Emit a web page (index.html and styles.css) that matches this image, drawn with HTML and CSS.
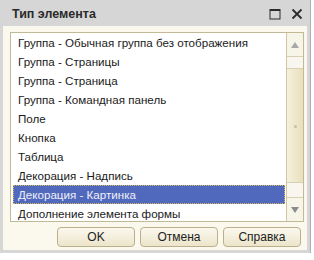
FILE: index.html
```html
<!DOCTYPE html>
<html lang="ru">
<head>
  <meta charset="UTF-8" />
  <title>Тип элемента</title>
  <link rel="stylesheet" href="styles.css">
</head>
<body>
  <div class="window">
    <div class="titlebar">
      <span class="title">Тип элемента</span>
      <span class="title-btns">
        <svg width="12" height="12" viewBox="0 0 12 12"><rect x="1" y="1.5" width="10" height="9.5" fill="none" stroke="#2b2b2b" stroke-width="1"/><line x1="1" y1="2" x2="11" y2="2" stroke="#2b2b2b" stroke-width="2"/></svg>
        <svg width="12" height="12" viewBox="0 0 12 12"><path d="M1.5 1.5 L10.5 10.5 M10.5 1.5 L1.5 10.5" stroke="#2b2b2b" stroke-width="1.8"/></svg>
      </span>
    </div>
    <div class="client">
      <div class="listbox">
        <ul class="items">
          <li>Группа - Обычная группа без отображения</li>
          <li>Группа - Страницы</li>
          <li>Группа - Страница</li>
          <li>Группа - Командная панель</li>
          <li>Поле</li>
          <li>Кнопка</li>
          <li>Таблица</li>
          <li>Декорация - Надпись</li>
          <li class="selected">Декорация - Картинка</li>
          <li>Дополнение элемента формы</li>
        </ul>
        <div class="scrollbar">
          <div class="sb-btn"><svg width="8" height="6" viewBox="0 0 8 6"><path d="M4 0 L8 6 L0 6 Z" fill="#a8a8a8"/></svg></div>
          <div class="sb-track top"></div>
          <div class="sb-thumb"><span class="grip"></span></div>
          <div class="sb-track bottom"></div>
          <div class="sb-btn"><svg width="8" height="6" viewBox="0 0 8 6"><path d="M0 0 L8 0 L4 6 Z" fill="#8c8c8c"/></svg></div>
        </div>
      </div>
      <div class="buttons">
        <button>OK</button>
        <button>Отмена</button>
        <button>Справка</button>
      </div>
    </div>
  </div>
</body>
</html>
```

FILE: styles.css
```css
html, body {
  margin: 0;
  padding: 0;
  background: #ffffff;
  font-family: 'Liberation Sans', Arial, sans-serif;
}
.window {
  width: 304px;
  height: 250px;
  background: #d6d6d6;
  padding: 0 3px 3px 3px;
  display: flex;
  flex-direction: column;
  border-right: 1px solid #b0b0b0;
}
.titlebar {
  height: 26px;
  display: flex;
  align-items: center;
  justify-content: space-between;
  padding: 0 4px 0 9px;
}
.title {
  font-weight: bold;
  font-size: 12.5px;
  color: #2a2a2a;
  padding-top: 2px;
}
.title-btns {
  display: flex;
  gap: 10px;
  padding-top: 2px;
}
.client {
  flex: 1;
  background: #fbf9ee;
  padding: 6px 3px 0 7px;
  display: flex;
  flex-direction: column;
}
.listbox {
  height: 188px;
  border: 1px solid #c2b995;
  background: #ffffff;
  display: flex;
  overflow: hidden;
}
.items {
  list-style: none;
  margin: 0;
  padding: 0 1px 0 2px;
  flex: 1;
}
.items li {
  height: 19px;
  line-height: 19px;
  padding-left: 5px;
  font-size: 11.6px;
  color: #1a1a1a;
  white-space: nowrap;
  box-sizing: border-box;
}
.items li.selected {
  background: #5169bd;
  color: #f0f0f8;
  outline: 1px dotted #d8b85a;
  outline-offset: -1px;
}
.scrollbar {
  width: 16px;
  border-left: 1px solid #cfc6a6;
  display: flex;
  flex-direction: column;
  background: #f8f6ee;
}
.sb-btn {
  height: 23px;
  display: flex;
  align-items: center;
  justify-content: center;
  background: #f7f4e8;
}
.sb-track.top {
  height: 11px;
  border-top: 1px solid #d8d0b2;
}
.sb-thumb {
  flex: 1;
  background: linear-gradient(to right, #f5f0dc, #e8dfbc);
  border-top: 1px solid #d8d0b2;
  border-bottom: 1px solid #d8d0b2;
  position: relative;
}
.grip {
  position: absolute;
  left: 7px;
  top: 56px;
  width: 3px;
  height: 3px;
  border-radius: 50%;
  background: #c8bfa0;
}
.sb-track.bottom {
  height: 14px;
  border-bottom: 1px solid #d8d0b2;
}
.buttons {
  display: flex;
  justify-content: flex-end;
  gap: 5px;
  margin-top: 5px;
  margin-right: 3px;
}
.buttons button {
  width: 78px;
  height: 20px;
  border: 1px solid #bcb08a;
  border-radius: 4px;
  background: linear-gradient(#fbf8ee, #ece5cb);
  font-family: 'Liberation Sans', Arial, sans-serif;
  font-size: 12px;
  color: #222;
  padding: 0;
}
```
